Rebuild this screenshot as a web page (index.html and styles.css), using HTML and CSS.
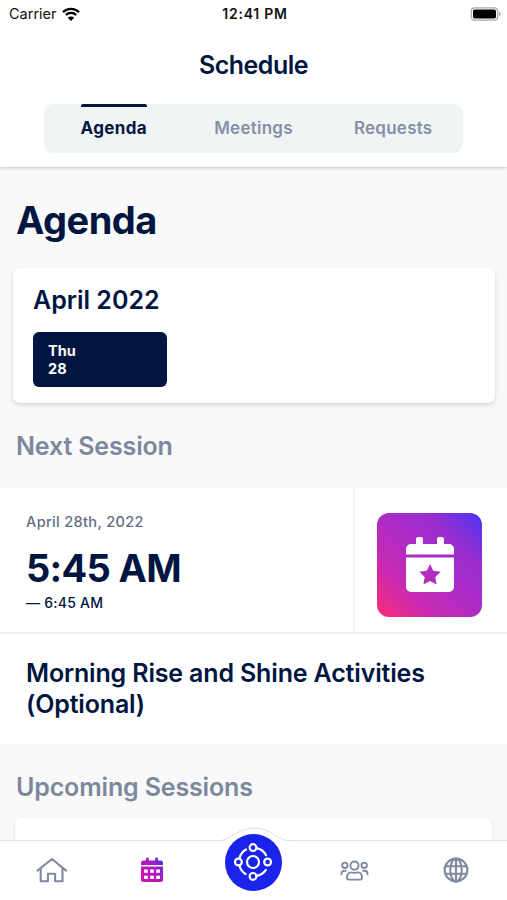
FILE: index.html
```html
<!DOCTYPE html>
<html lang="en">
<head>
  <meta charset="UTF-8">
  <meta name="viewport" content="width=device-width, initial-scale=1">
  <title>Schedule</title>
  <link rel="stylesheet" href="styles.css">
</head>
<body>
  <header class="header">
    <div class="status-bar">
      <div class="carrier">
        <span class="carrier-name">Carrier</span>
        <svg class="wifi" viewBox="0 0 18 14" width="18" height="14">
          <path d="M1 5.2a11.3 11.3 0 0 1 16 0M3.8 8a7.4 7.4 0 0 1 10.4 0" fill="none" stroke="#000" stroke-width="2.3"/>
          <path d="M9 14 5.8 10.7a4.6 4.6 0 0 1 6.4 0Z"/>
        </svg>
      </div>
      <span class="clock">12:41 PM</span>
      <svg class="battery" viewBox="0 0 31 14" width="31" height="14">
        <rect x="1.3" y=".8" width="26.4" height="12.4" rx="3.4" fill="#fff" stroke="#aaa" stroke-width="1.3"/>
        <rect x="3" y="2.5" width="23" height="9" rx="1.8"/>
        <path d="M29 4.8q1.8.6 1.8 2.2T29 9.200Z" fill="#aaa"/>
      </svg>
    </div>
    <h1 class="title">Schedule</h1>
    <nav class="tabs">
      <a class="tab active"><span>Agenda</span></a>
      <a class="tab"><span>Meetings</span></a>
      <a class="tab"><span>Requests</span></a>
    </nav>
  </header>

  <main class="content">
    <h2 class="page-heading">Agenda</h2>
    <section class="month-card">
      <h3 class="month">April 2022</h3>
      <div class="day">
        <span>Thu</span>
        <span>28</span>
      </div>
    </section>

    <h3 class="section-heading">Next Session</h3>
    <section class="session">
      <div class="session-top">
        <div class="session-time">
          <span class="date">April 28th, 2022</span>
          <span class="start">5:45 AM</span>
          <span class="end">— 6:45 AM</span>
        </div>
        <div class="session-image">
          <div class="thumb">
            <svg viewBox="0 0 48 55" width="48" height="55">
              <path d="M0 17.500V12a5 5 0 0 1 5-5h5V2a2 2 0 0 1 2-2h3a2 2 0 0 1 2 2v5h14V2a2 2 0 0 1 2-2h3a2 2 0 0 1 2 2v5h5a5 5 0 0 1 5 5v5.500Z" fill="#fff"/>
              <path fill-rule="evenodd" d="M0 20.500h48V50a5 5 0 0 1-5 5H5a5 5 0 0 1-5-5ZM24 27l-3.200 6.700-7.500 1.100 5.400 5.200-1.300 7.500 6.600-3.500 6.600 3.500-1.300-7.500 5.400-5.200-7.500-1.100Z" fill="#fff"/>
            </svg>
          </div>
        </div>
      </div>
      <p class="session-name">Morning Rise and Shine Activities (Optional)</p>
    </section>

    <h3 class="section-heading upcoming">Upcoming Sessions</h3>
    <div class="upcoming-card"></div>
  </main>

  <nav class="bottom-nav">
    <!-- Curve behind the raised centre button -->
    <svg class="bump" viewBox="0 0 74 15" width="74" height="15">
      <path d="M0 14.500C15 14.500 19 1.500 37 1.500S59 14.500 74 14.500V15H0Z" fill="#fff"/>
      <path d="M0 13.800C15 13.800 19 1 37 1S59 13.800 74 13.800" fill="none" stroke="#e2e3e4"/>
    </svg>
    <a class="nav-item">
      <svg viewBox="0 0 32 26" width="32" height="26" fill="none" stroke="#7f8aa3" stroke-width="2.100" stroke-linecap="round" stroke-linejoin="round">
        <path d="M2.500 13.600 17 2l14 11.600M5.700 11.500v12.800h7.200v-7.500h7.200v7.500h7.400V11.500"/>
      </svg>
    </a>
    <a class="nav-item">
      <svg viewBox="0 0 22 26" width="22" height="26">
        <defs>
          <linearGradient id="calendar-fill" x1="0" y1="1" x2="1" y2="0">
            <stop offset="0" stop-color="#d510a5"/>
            <stop offset=".6" stop-color="#a91bc4"/>
            <stop offset="1" stop-color="#4c27ef"/>
          </linearGradient>
        </defs>
        <path fill="url(#calendar-fill)" fill-rule="evenodd" d="M0 8V6a2.500 2.500 0 0 1 2.500-2.500H5V2a1.400 1.400 0 0 1 2.800 0v1.500h6.400V2A1.400 1.400 0 0 1 17 2v1.500h2.500A2.500 2.500 0 0 1 22 6v2ZM0 9.500h22v13a2.500 2.500 0 0 1-2.500 2.500h-17A2.500 2.500 0 0 1 0 22.500ZM3 12.500v3.300h3.800v-3.300ZM9.100 12.500v3.300h3.800v-3.300ZM15.200 12.500v3.300H19v-3.300ZM3 18.700V22h3.800v-3.300ZM9.100 18.700V22h3.800v-3.300ZM15.200 18.700V22H19v-3.300Z"/>
      </svg>
    </a>
    <a class="nav-item">
      <span class="hub">
        <svg viewBox="0 0 38 38" width="38" height="38" fill="none" stroke="#fff" stroke-width="2.200">
          <circle cx="19" cy="19" r="6"/>
          <circle cx="19" cy="4.600" r="3.400"/>
          <circle cx="33.600" cy="19" r="3.400"/>
          <circle cx="19" cy="33.400" r="3.400"/>
          <circle cx="4.400" cy="19" r="3.400"/>
          <path stroke-linecap="round" d="M5.500 15A14 14 0 0 1 12 6.500M22.500 5.200a14 14 0 0 1 9.500 7M31.900 26.800a14 14 0 0 1-9.400 6M5.500 23a14 14 0 0 0 6 8"/>
        </svg>
      </span>
    </a>
    <a class="nav-item">
      <svg viewBox="0 0 30 22" width="30" height="22" fill="none" stroke="#7f8aa3" stroke-width="1.900" stroke-linecap="round" stroke-linejoin="round">
        <circle cx="14.500" cy="6.600" r="4.100"/>
        <circle cx="4.900" cy="6.300" r="2.700"/>
        <circle cx="24.200" cy="6.300" r="2.700"/>
        <path d="M7 18.800c0-3.700 2-5.400 4.200-5.400 1.300 0 1.800.5 3.300.5s2-.5 3.300-.5c2.200 0 4.200 1.700 4.200 5.400 0 1.200-.6 1.800-1.700 1.800H8.700c-1.100 0-1.700-.6-1.700-1.800ZM1.500 15.200c0-2.200 1.100-3.400 2.800-3.400h1.600M27.500 15.200c0-2.200-1.100-3.400-2.800-3.400h-1.600"/>
      </svg>
    </a>
    <a class="nav-item">
      <svg viewBox="0 0 26 26" width="26" height="26" fill="none" stroke="#7f8aa3" stroke-width="2.100">
        <circle cx="13" cy="13" r="11.400"/>
        <ellipse cx="13" cy="13" rx="5.800" ry="11.400"/>
        <path d="M13 1.600v22.800M2.500 9.300h21M2.500 16.700h21"/>
      </svg>
    </a>
  </nav>
</body>
</html>
```
FILE: styles.css
```css
* {
  box-sizing: border-box;
}
body {
  margin: 0;
  height: 100vh;
  display: flex;
  flex-direction: column;
  overflow: hidden;
  background-color: #f9f9f9;
  color: #001641;
  font-family: Inter, "Liberation Sans", sans-serif;
}
h1, h2, h3, p {
  margin: 0;
}
svg {
  display: block;
}

/* Header */
.header {
  flex: none;
  height: 167px;
  background-color: #fff;
  box-shadow: 0 1px 3px rgba(0, 0, 0, 0.22);
}
.status-bar {
  height: 27px;
  padding: 0 6px 0 9px;
  display: grid;
  grid-template-columns: 1fr auto 1fr;
  align-items: center;
  color: #111;
  font-size: 14px;
}
.carrier {
  display: flex;
  align-items: center;
  gap: 5px;
}
.carrier-name {
  font-size: 14.5px;
}
.clock {
  font-weight: 600;
  letter-spacing: 0.75px;
}
.battery {
  justify-self: end;
}
.title {
  height: 77px;
  padding-top: 2px;
  font-size: 25px;
  line-height: 72px;
  font-weight: 600;
  letter-spacing: -0.5px;
  text-align: center;
}
.tabs {
  height: 49px;
  margin: 0 44px;
  display: grid;
  grid-template-columns: repeat(3, 1fr);
  background-color: #f1f4f5;
  border-radius: 9px;
}
.tab {
  display: flex;
  justify-content: center;
  color: #8490a8;
  font-size: 17px;
  font-weight: 600;
  letter-spacing: 0.25px;
  line-height: 43px;
}
.tab span {
  border-top: 3px solid transparent;
}
.tab.active {
  color: #001641;
  font-weight: 700;
  letter-spacing: 0.35px;
}
.tab.active span {
  border-color: #001641;
  border-radius: 2px;
}

/* Content */
.content {
  flex: 1;
  min-height: 0;
  overflow: hidden;
}
.page-heading {
  padding: 29px 16px 0;
  font-size: 38px;
  line-height: 48px;
  font-weight: 700;
  letter-spacing: -0.5px;
}
.month-card {
  height: 135px;
  margin: 24px 12px 0 13px;
  padding: 17px 20px;
  background-color: #fff;
  border-radius: 7px;
  box-shadow: 0 2px 4px rgba(0, 0, 0, 0.15);
}
.month {
  font-size: 25px;
  line-height: 30px;
  font-weight: 600;
}
.day {
  width: 134px;
  height: 55px;
  margin-top: 17px;
  padding: 10px 15px;
  display: flex;
  flex-direction: column;
  background-color: #001641;
  border-radius: 6px;
  color: #fff;
  font-size: 14.5px;
  line-height: 18px;
  font-weight: 700;
}
.section-heading {
  height: 85px;
  padding: 27px 16px 0;
  color: #7c889e;
  font-size: 25px;
  line-height: 32px;
  font-weight: 600;
  letter-spacing: -0.15px;
}
.session {
  height: 256px;
  background-color: #fff;
}
.session-top {
  height: 146px;
  display: flex;
  border-bottom: 2px solid #eeeff0;
}
.session-time {
  flex: 1;
  padding: 24px 26px 0;
  display: flex;
  flex-direction: column;
}
.date {
  color: #5f6c86;
  font-size: 14.5px;
  line-height: 20px;
  font-weight: 500;
  letter-spacing: 0.35px;
}
.start {
  margin-top: 12px;
  font-size: 38px;
  line-height: 48px;
  font-weight: 700;
  letter-spacing: -0.7px;
}
.end {
  font-size: 14px;
  line-height: 22px;
  font-weight: 500;
  letter-spacing: 0.25px;
}
.session-image {
  width: 154px;
  padding: 25px 0 0 22px;
  border-left: 2px solid #f0f1f2;
}
.thumb {
  width: 105px;
  height: 104px;
  padding: 24px 0 0 29px;
  border-radius: 12px;
  background: linear-gradient(45deg, #fb2d76 0%, #c82ab0 27%, #a92cc9 55%, #982ece 74%, #4b32f2 100%);
}
.session-name {
  padding: 24px 26px 0;
  font-size: 25px;
  line-height: 30.5px;
  font-weight: 600;
  letter-spacing: -0.16px;
}
.upcoming {
  height: 74px;
}
.upcoming-card {
  height: 80px;
  margin: 0 15px;
  background-color: #fff;
  border-radius: 6px;
  box-shadow: 0 1px 3px rgba(0, 0, 0, 0.12);
}

/* Bottom navigation */
.bottom-nav {
  position: relative;
  flex: none;
  height: 60px;
  padding-bottom: 1px;
  display: grid;
  grid-template-columns: repeat(5, 1fr);
  align-items: center;
  background-color: #fff;
  border-top: 1px solid #e2e3e4;
}
.bump {
  position: absolute;
  left: 217px;
  top: -14px;
}
.nav-item {
  display: flex;
  justify-content: center;
}
/* The hub button rises above the bar */
.hub {
  position: relative;
  top: -8px;
  width: 57px;
  height: 57px;
  display: flex;
  align-items: center;
  justify-content: center;
  background-color: #1a23e9;
  border-radius: 50%;
}
```
